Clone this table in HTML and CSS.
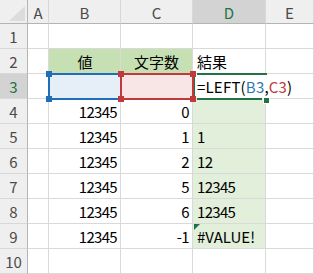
FILE: index.html
```html
<!DOCTYPE html>
<html>
<head>
  <title>LEFT関数</title>
  <link rel="stylesheet" href="styles.css">
</head>
<body>
  <div class="sheet">
    <!-- column headers -->
    <div class="hd corner"><span class="tri"></span></div>
    <div class="hd col">A</div>
    <div class="hd col">B</div>
    <div class="hd col">C</div>
    <div class="hd col active-col">D</div>
    <div class="hd col">E</div>

    <div class="hd row">1</div>
    <div class="c"></div><div class="c"></div><div class="c"></div><div class="c"></div><div class="c"></div>

    <div class="hd row">2</div>
    <div class="c"></div>
    <div class="c head center">値</div>
    <div class="c head center shift">文字数</div>
    <div class="c">結果</div>
    <div class="c"></div>

    <div class="hd row active-row">3</div>
    <div class="c"></div>
    <div class="c ref-b"></div>
    <div class="c ref-c"></div>
    <div class="c edit">=LEFT(<span class="blue">B3</span>,<span class="red">C3</span>)</div>
    <div class="c"></div>

    <div class="hd row">4</div>
    <div class="c"></div><div class="c num">12345</div><div class="c num">0</div><div class="c res"></div><div class="c"></div>

    <div class="hd row">5</div>
    <div class="c"></div><div class="c num">12345</div><div class="c num">1</div><div class="c res">1</div><div class="c"></div>

    <div class="hd row">6</div>
    <div class="c"></div><div class="c num">12345</div><div class="c num">2</div><div class="c res">12</div><div class="c"></div>

    <div class="hd row">7</div>
    <div class="c"></div><div class="c num">12345</div><div class="c num">5</div><div class="c res">12345</div><div class="c"></div>

    <div class="hd row">8</div>
    <div class="c"></div><div class="c num">12345</div><div class="c num">6</div><div class="c res">12345</div><div class="c"></div>

    <div class="hd row">9</div>
    <div class="c"></div><div class="c num">12345</div><div class="c num">-1</div><div class="c res err">#VALUE!</div><div class="c"></div>

    <div class="hd row">10</div>
    <div class="c"></div><div class="c"></div><div class="c"></div><div class="c"></div><div class="c"></div>

    <!-- range outlines drawn over the grid while editing D3 -->
    <div class="range range-b"><i class="h tl"></i><i class="h tr"></i><i class="h bl"></i><i class="h br"></i></div>
    <div class="range range-c"><i class="h tl"></i><i class="h tr"></i><i class="h bl"></i><i class="h br"></i></div>
    <div class="cursor-top"></div>
    <div class="cursor-left"></div>
    <div class="cursor-bottom"></div>
    <div class="fill-handle"></div>
  </div>
</body>
</html>
```

FILE: styles.css
```css
body {
  margin: 0;
  background-color: #ffffff;
  font-family: "Noto Sans CJK JP", "Noto Sans", sans-serif;
  font-size: 15px;
  color: #000000;
}

.sheet {
  position: relative;
  display: grid;
  grid-template-columns: 28px 21px 72px 72px 73px 48px;
  grid-template-rows: 24px repeat(10, 25px);
  width: 314px;
  height: 274px;
  overflow: hidden;
}

/* headers */
.hd {
  box-sizing: border-box;
  background-color: #efefef;
  color: #4a4a4a;
  display: flex;
  align-items: center;
  justify-content: center;
  border-right: 1px solid #d8d8d8;
  border-bottom: 1px solid #d8d8d8;
}

.hd.col {
  border-bottom: 1px solid #b4b4b4;
  padding-top: 1px;
}

.hd.row {
  border-right: 1px solid #b4b4b4;
}

.corner {
  border-bottom: 1px solid #b4b4b4;
  border-right: 1px solid #b4b4b4;
  position: relative;
}

.tri {
  position: absolute;
  right: 2px;
  bottom: 2px;
  width: 16px;
  height: 15px;
  background-color: #dcdcdc;
  clip-path: polygon(100% 0, 100% 100%, 0 100%);
}

.active-col {
  background-color: #d3d3d3;
  color: #217346;
  border-bottom: 2px solid #217346;
}

.active-row {
  background-color: #d3d3d3;
  color: #217346;
  border-right: 2px solid #217346;
}

/* cells */
.c {
  box-sizing: border-box;
  border-right: 1px solid #d9d9d9;
  border-bottom: 1px solid #d9d9d9;
  display: flex;
  align-items: center;
  padding: 1px 3px 0 4px;
  white-space: nowrap;
}

.head {
  background-color: #c6e0b4;
}

.center {
  justify-content: center;
}

.shift {
  padding-right: 4px;
}

.num {
  justify-content: flex-end;
  letter-spacing: -0.7px;
  padding-right: 3px;
}

.res {
  background-color: #e2efda;
  letter-spacing: -0.7px;
}

.err {
  position: relative;
  letter-spacing: 0;
}

.err::before {
  content: "";
  position: absolute;
  left: 1px;
  top: 0;
  border-top: 6px solid #1e7145;
  border-right: 6px solid transparent;
}

.ref-b {
  background-color: #e6eff8;
}

.ref-c {
  background-color: #f8e6e6;
}

.edit {
  overflow: visible;
  position: relative;
  z-index: 1;
  border-right: none;
  letter-spacing: 0.2px;
}

.blue {
  color: #2e75b6;
}

.red {
  color: #c0393b;
}

/* range outlines */
.range {
  position: absolute;
  top: 73px;
  height: 27px;
  width: 74px;
  box-sizing: border-box;
  border: 2px solid;
  z-index: 2;
}

.range-b {
  left: 48px;
  border-color: #1e6eb8;
}

.range-c {
  left: 120px;
  border-color: #c0393b;
  z-index: 3;
}

.h {
  position: absolute;
  width: 6px;
  height: 6px;
}

.range-b .h {
  background-color: #1e6eb8;
}

.range-c .h {
  background-color: #c0393b;
}

.tl { left: -4px; top: -4px; }
.tr { right: -4px; top: -4px; }
.bl { left: -4px; bottom: -4px; }
.br { right: -4px; bottom: -4px; }

.cursor-top,
.cursor-bottom,
.cursor-left,
.fill-handle {
  position: absolute;
  background-color: #217346;
  z-index: 2;
}

.cursor-top {
  left: 197px;
  top: 73px;
  width: 70px;
  height: 2px;
}

.cursor-bottom {
  left: 197px;
  top: 98px;
  width: 65px;
  height: 2px;
}

.cursor-left {
  left: 193px;
  top: 77px;
  width: 2px;
  height: 19px;
}

.fill-handle {
  left: 263px;
  top: 97px;
  width: 5px;
  height: 5px;
  border: 1px solid #ffffff;
  box-sizing: content-box;
}
```
